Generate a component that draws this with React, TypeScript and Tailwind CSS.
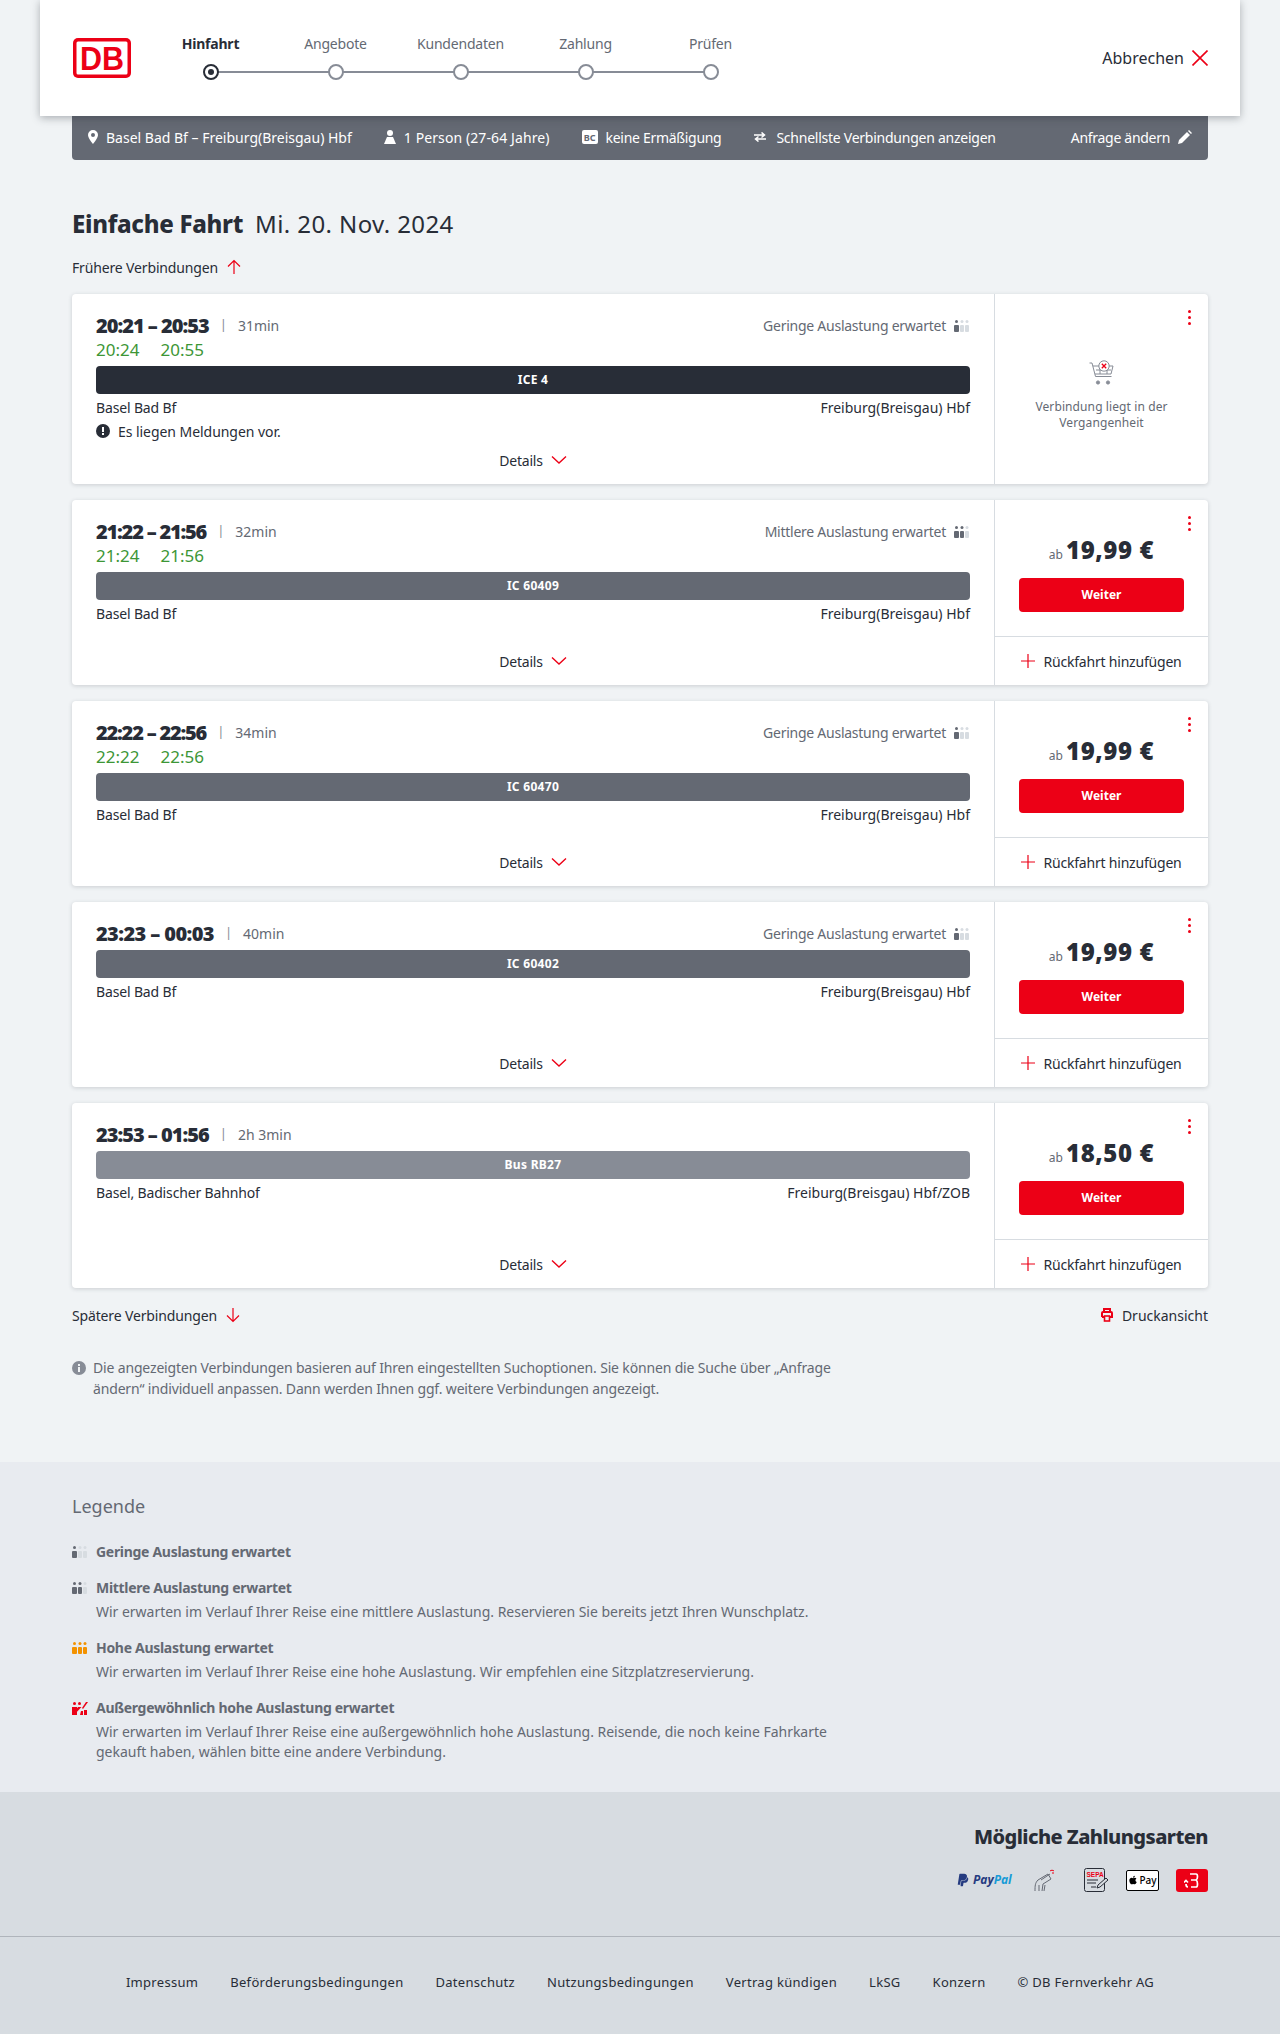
import React from "react";
import { FaPaypal, FaApple } from "react-icons/fa";

const RED = "#ec0016";

function Occ({ level, color = "#646973", off = "#d7dce1" }: { level: number; color?: string; off?: string }) {
  const c = (i: number) => (i < level ? color : off);
  return (
    <svg width="16" height="12" viewBox="0 0 16 12" className="shrink-0">
      {[0, 6, 11].map((x, i) => (
        <g key={i} fill={c(i)}>
          <circle cx={x + (i === 0 ? 2.5 : 2)} cy="1.5" r="1.5" />
          <rect x={x} y="5" width={i === 0 ? 5 : 4} height="7" rx="1" />
        </g>
      ))}
    </svg>
  );
}

function OccRed() {
  return (
    <svg width="16" height="13" viewBox="0 0 16 13" className="shrink-0">
      <g fill={RED}>
        <circle cx="2.5" cy="1.5" r="1.5" />
        <circle cx="7.5" cy="1.5" r="1.5" />
        <path d="M0 5h5v8H0zM6 5h3.5L2 13H0zM9 9h2v4H8zM12 8h3v5h-3z" />
        <path d="M10 6l4-6h2l-5 7z" />
      </g>
    </svg>
  );
}

function ArrowV({ up }: { up?: boolean }) {
  return (
    <svg width="16" height="16" viewBox="0 0 16 16" fill="none" stroke={RED} strokeWidth="1.2" className={up ? "" : "rotate-180"}>
      <path d="M8 15V1.5M2 7.5l6-6 6 6" />
    </svg>
  );
}

function Chevron() {
  return (
    <svg width="16" height="10" viewBox="0 0 16 10" fill="none" stroke={RED} strokeWidth="1.4">
      <path d="M1 1.5l7 6.5 7-6.5" />
    </svg>
  );
}

function Dots() {
  return (
    <div className="absolute right-[17px] top-[16px] flex flex-col gap-[3px]">
      <span className="block w-[3px] h-[3px] rounded-full bg-[#ec0016]" />
      <span className="block w-[3px] h-[3px] rounded-full bg-[#ec0016]" />
      <span className="block w-[3px] h-[3px] rounded-full bg-[#ec0016]" />
    </div>
  );
}

function Cart() {
  return (
    <svg width="26" height="26" viewBox="0 0 26 26" fill="none" stroke="#878c96" strokeWidth="1">
      <path d="M0.5 3h2.5l3.5 13.5h16" />
      <path d="M4 6h20l-2 8H6" />
      <path d="M7 10h15M11 6v8M18 6v8" />
      <circle cx="9" cy="22.5" r="1.6" fill="#878c96" />
      <circle cx="19" cy="22.5" r="1.6" fill="#878c96" />
      <circle cx="15" cy="6" r="5.2" fill="#fff" />
      <path d="M12.8 3.8l4.4 4.4M17.2 3.8l-4.4 4.4" stroke={RED} strokeWidth="1.3" />
    </svg>
  );
}

type Conn = {
  time: string;
  track: string;
  dur: string;
  green?: [string, string];
  load: string;
  level?: number;
  train: string;
  bar: string;
  from: string;
  to: string;
  price?: string;
  msg?: boolean;
};

const conns: Conn[] = [
  { time: "20:21 – 20:53", track: "tracking-[-1px]", dur: "31min", green: ["20:24", "20:55"], load: "Geringe Auslastung erwartet", level: 1, train: "ICE 4", bar: "bg-[#282d37]", from: "Basel Bad Bf", to: "Freiburg(Breisgau) Hbf", msg: true },
  { time: "21:22 – 21:56", track: "tracking-[-1.2px]", dur: "32min", green: ["21:24", "21:56"], load: "Mittlere Auslastung erwartet", level: 2, train: "IC 60409", bar: "bg-[#646973]", from: "Basel Bad Bf", to: "Freiburg(Breisgau) Hbf", price: "19,99 €" },
  { time: "22:22 – 22:56", track: "tracking-[-1.2px]", dur: "34min", green: ["22:22", "22:56"], load: "Geringe Auslastung erwartet", level: 1, train: "IC 60470", bar: "bg-[#646973]", from: "Basel Bad Bf", to: "Freiburg(Breisgau) Hbf", price: "19,99 €" },
  { time: "23:23 – 00:03", track: "tracking-[-0.6px]", dur: "40min", load: "Geringe Auslastung erwartet", level: 1, train: "IC 60402", bar: "bg-[#646973]", from: "Basel Bad Bf", to: "Freiburg(Breisgau) Hbf", price: "19,99 €" },
  { time: "23:53 – 01:56", track: "tracking-[-1px]", dur: "2h 3min", load: "", train: "Bus RB27", bar: "bg-[#878c96]", from: "Basel, Badischer Bahnhof", to: "Freiburg(Breisgau) Hbf/ZOB", price: "18,50 €" },
];

function Card({ c }: { c: Conn }) {
  return (
    <div className={`flex bg-white rounded-[4px] shadow-[0_1px_4px_rgba(40,45,55,0.18)] ${c.msg ? "h-[190px]" : "h-[185px]"}`}>
      <div className="flex-1 min-w-0 flex flex-col pt-[20px] pl-[24px] pr-[24px] pb-[14px]">
        <div className="flex items-center h-[24px]">
          <span className={`text-[20px] font-black ${c.track} text-[#282d37]`}>{c.time}</span>
          <span className="ml-[11px] pb-[2px] text-[13px] text-[#878c96]">|</span>
          <span className="ml-[11px] pb-[2px] text-[14px] text-[#646973]">{c.dur}</span>
          {c.load && (
            <div className="ml-auto flex items-center gap-[8px]">
              <span className="pb-[2px] text-[14px] tracking-[-0.25px] text-[#646973]">{c.load}</span>
              <Occ level={c.level ?? 1} />
            </div>
          )}
        </div>
        {c.green && (
          <div className="flex h-[24px] items-center text-[17px] text-[#3d9636] gap-[21px]">
            <span>{c.green[0]}</span>
            <span>{c.green[1]}</span>
          </div>
        )}
        <div className={`mt-[4px] h-[28px] rounded-[4px] ${c.bar} flex items-center justify-center text-white text-[12px] font-bold tracking-[0.3px]`}>
          {c.train}
        </div>
        <div className="mt-[3px] h-[20px] flex justify-between items-center text-[14px] text-[#282d37]">
          <span className="tracking-[-0.15px]">{c.from}</span>
          <span>{c.to}</span>
        </div>
        {c.msg && (
          <div className="mt-[4px] h-[20px] flex items-center gap-[8px] text-[14px] tracking-[-0.05px] text-[#282d37]">
            <svg width="14" height="14" viewBox="0 0 14 14">
              <circle cx="7" cy="7" r="7" fill="#282d37" />
              <rect x="6" y="3" width="2" height="5" fill="#fff" />
              <rect x="6" y="9" width="2" height="2" fill="#fff" />
            </svg>
            Es liegen Meldungen vor.
          </div>
        )}
        <div className="mt-auto h-[20px] flex items-center justify-center gap-[8px] text-[14px] tracking-[-0.2px] text-[#282d37]">
          Details
          <Chevron />
        </div>
      </div>
      <div className="relative w-[214px] shrink-0 border-l border-[#d7dce1] flex flex-col">
        <Dots />
        {c.price ? (
          <>
            <div className="h-[137px] border-b border-[#d7dce1] flex flex-col items-center pt-[32px]">
              <div className="flex items-baseline gap-[3px] h-[36px]">
                <span className="text-[12px] text-[#646973]">ab</span>
                <span className="text-[24px] font-black tracking-[0.6px] text-[#282d37] leading-[36px]">{c.price}</span>
              </div>
              <div className="mt-[10px] w-[165px] h-[34px] rounded-[4px] bg-[#ec0016] text-white text-[12px] font-bold flex items-center justify-center">
                Weiter
              </div>
            </div>
            <div className="flex-1 flex items-center justify-center gap-[8px] text-[14px] tracking-[-0.2px] text-[#282d37]">
              <svg width="14" height="14" viewBox="0 0 14 14" stroke={RED} strokeWidth="1.2">
                <path d="M7 0v14M0 7h14" />
              </svg>
              Rückfahrt hinzufügen
            </div>
          </>
        ) : (
          <div className="flex-1 flex flex-col items-center pt-[66px]">
            <Cart />
            <div className="mt-[13px] w-[150px] text-center text-[12px] tracking-[0.1px] leading-[16px] text-[#646973]">
              Verbindung liegt in der Vergangenheit
            </div>
          </div>
        )}
      </div>
    </div>
  );
}

function Step({ label, active, last }: { label: string; active?: boolean; last?: boolean }) {
  return (
    <div className="relative w-[125px] flex flex-col items-center">
      <span className={`text-[14px] leading-[20px] tracking-[-0.2px] ${active ? "font-bold text-[#282d37]" : "text-[#646973]"}`}>{label}</span>
      <div className="mt-[10px] relative h-[16px] w-full flex justify-center">
        {!last && <div className="absolute left-1/2 top-[7px] w-full h-[2px] bg-[#878c96]" />}
        <div className={`relative w-[16px] h-[16px] rounded-full border-2 bg-white flex items-center justify-center ${active ? "border-[#282d37]" : "border-[#878c96]"}`}>
          {active && <span className="block w-[6px] h-[6px] rounded-full bg-[#282d37]" />}
        </div>
      </div>
    </div>
  );
}

function Legend({ icon, title, children, mb }: { icon: React.ReactNode; title: string; children?: React.ReactNode; mb?: string }) {
  return (
    <div className={`flex ${mb ?? ""}`}>
      <div className="w-[24px] shrink-0 pt-[4px]">{icon}</div>
      <div>
        <div className="text-[14px] leading-[20px] font-bold tracking-[-0.3px] text-[#646973]">{title}</div>
        {children && <div className="mt-[4px] w-[780px] text-[14px] leading-[20px] tracking-[-0.02px] text-[#646973]">{children}</div>}
      </div>
    </div>
  );
}

export default function App() {
  return (
    <div className="min-h-[2034px] bg-[#f0f3f5] font-['Noto_Sans','Open_Sans',sans-serif] text-[#282d37]">
      <div className="relative z-10 mx-[40px] h-[116px] bg-white shadow-[0_2px_8px_rgba(40,45,55,0.35)] flex items-center pl-[33px] pr-[32px]">
        <svg width="58" height="40" viewBox="0 0 58 40" className="shrink-0">
          <rect x="0" y="0" width="58" height="40" rx="5" fill={RED} />
          <rect x="3.500" y="3.500" width="51" height="33" rx="1.5" fill="#fff" />
          <text x="29" y="32" textAnchor="middle" fontFamily="'Liberation Sans',sans-serif" fontWeight="700" fontSize="33" fill={RED} textLength="44" lengthAdjust="spacingAndGlyphs">DB</text>
        </svg>
        <div className="ml-[17px] flex self-start mt-[34px]">
          <Step label="Hinfahrt" active />
          <Step label="Angebote" />
          <Step label="Kundendaten" />
          <Step label="Zahlung" />
          <Step label="Prüfen" last />
        </div>
        <div className="ml-auto flex items-center gap-[8px] text-[16px]">
          Abbrechen
          <svg width="16" height="16" viewBox="0 0 16 16" stroke={RED} strokeWidth="1.6">
            <path d="M0.5 0.5l15 15M15.5 0.5l-15 15" />
          </svg>
        </div>
      </div>

      <div className="mx-[72px] h-[44px] bg-[#646973] rounded-b-[4px] flex items-center px-[16px] pb-[2px] text-[14px] text-white">
        <svg width="10" height="14" viewBox="0 0 10 14" fill="#fff" className="mr-[8px]">
          <path fillRule="evenodd" d="M5 0a5 5 0 0 1 5 5c0 3.4-5 9-5 9S0 8.400 0 5a5 5 0 0 1 5-5zm0 3a2 2 0 1 0 0 4 2 2 0 0 0 0-4z" />
        </svg>
        <span>Basel Bad Bf – Freiburg(Breisgau) Hbf</span>
        <svg width="12" height="14" viewBox="0 0 12 14" fill="#fff" className="ml-[32px] mr-[8px]">
          <circle cx="6" cy="3" r="3" />
          <path d="M3 7h6l3 7H0z" />
        </svg>
        <span className="tracking-[0.1px]">1 Person (27-64 Jahre)</span>
        <span className="ml-[32px] mr-[8px] w-[16px] h-[14px] rounded-[2px] bg-white text-[#646973] text-[9px] font-bold flex items-center justify-center leading-none">BC</span>
        <span className="tracking-[-0.3px]">keine Ermäßigung</span>
        <svg width="12" height="10" viewBox="0 0 12 10" fill="none" stroke="#fff" strokeWidth="1.5" className="ml-[33px] mr-[10px]">
          <path d="M0 3h10M7.500 0.500L10.500 3 7.500 5.500M12 7H2M4.500 4.500L1.500 7l3 2.500" />
        </svg>
        <span className="tracking-[-0.25px]">Schnellste Verbindungen anzeigen</span>
        <span className="ml-auto mr-[8px] tracking-[-0.3px]">Anfrage ändern</span>
        <svg width="14" height="14" viewBox="0 0 14 14" fill="#fff">
          <path d="M0 14l1-4 8-8 3 3-8 8zM10 1l1-1 3 3-1 1z" />
        </svg>
      </div>

      <div className="mx-[72px]">
        <div className="mt-[48px] h-[32px] flex items-center gap-[12px] text-[24px]">
          <span className="font-extrabold tracking-[-0.3px]">Einfache Fahrt</span>
          <span className="tracking-[0.4px] text-[#282d37]">Mi. 20. Nov. 2024</span>
        </div>
        <div className="mt-[17px] h-[20px] flex items-center gap-[8px] text-[14px] tracking-[-0.15px]">
          Frühere Verbindungen
          <ArrowV up />
        </div>
        <div className="mt-[17px] flex flex-col gap-[16px]">
          {conns.map((c) => (
            <Card key={c.time} c={c} />
          ))}
        </div>
        <div className="mt-[17px] h-[20px] flex items-center text-[14px]">
          <span className="tracking-[-0.15px]">Spätere Verbindungen</span>
          <span className="ml-[8px]"><ArrowV /></span>
          <span className="ml-auto flex items-center gap-[8px]">
            <svg width="14" height="14" viewBox="0 0 14 14" fill="none" stroke={RED} strokeWidth="2">
              <path d="M4 3V1h6v2M2 9V5a1 1 0 0 1 1-1h8a1 1 0 0 1 1 1v4h-2M4 9H2" />
              <rect x="4.500" y="8" width="5" height="5" strokeWidth="1.6" />
            </svg>
            Druckansicht
          </span>
        </div>
        <div className="mt-[32px] flex gap-[7px] w-[780px] text-[14px] leading-[21px] tracking-[-0.16px] text-[#646973]">
          <svg width="14" height="14" viewBox="0 0 14 14" className="mt-[4px] shrink-0">
            <circle cx="7" cy="7" r="7" fill="#878c96" />
            <rect x="6" y="6" width="2" height="5" fill="#f0f3f5" />
            <rect x="6" y="3" width="2" height="2" fill="#f0f3f5" />
          </svg>
          <p>Die angezeigten Verbindungen basieren auf Ihren eingestellten Suchoptionen. Sie können die Suche über „Anfrage ändern“ individuell anpassen. Dann werden Ihnen ggf. weitere Verbindungen angezeigt.</p>
        </div>
      </div>

      <div className="mt-[63px] h-[330px] bg-[#e8ebf0] px-[72px] pt-[31px]">
        <div className="text-[18px] leading-[26px] text-[#646973]">Legende</div>
        <div className="mt-[23px] flex flex-col">
          <Legend icon={<Occ level={1} off="#d7dce1" />} title="Geringe Auslastung erwartet" mb="mb-[16px]" />
          <Legend icon={<Occ level={2} />} title="Mittlere Auslastung erwartet" mb="mb-[16px]">
            Wir erwarten im Verlauf Ihrer Reise eine mittlere Auslastung. Reservieren Sie bereits jetzt Ihren Wunschplatz.
          </Legend>
          <Legend icon={<Occ level={3} color="#f39200" />} title="Hohe Auslastung erwartet" mb="mb-[16px]">
            Wir erwarten im Verlauf Ihrer Reise eine hohe Auslastung. Wir empfehlen eine Sitzplatzreservierung.
          </Legend>
          <Legend icon={<OccRed />} title="Außergewöhnlich hohe Auslastung erwartet">
            Wir erwarten im Verlauf Ihrer Reise eine außergewöhnlich hohe Auslastung. Reisende, die noch keine Fahrkarte gekauft haben, wählen bitte eine andere Verbindung.
          </Legend>
        </div>
      </div>

      <div className="bg-[#d7dce1] h-[242px] flex flex-col">
        <div className="h-[145px] border-b border-[#afb4bb] px-[72px] pt-[30px] flex flex-col items-end">
          <div className="text-[20px] leading-[30px] font-extrabold text-[#282d37] tracking-[-0.55px]">Mögliche Zahlungsarten</div>
          <div className="mt-[15px] flex items-center h-[26px]">
            <div className="flex items-center gap-[3px] w-[56px]">
              <FaPaypal className="text-[#253b80]" size={14} />
              <span className="text-[12px] font-bold italic leading-none"><span className="text-[#253b80]">Pay</span><span className="text-[#179bd7]">Pal</span></span>
            </div>
            <svg width="22" height="24" viewBox="0 0 22 24" fill="none" stroke="#646973" strokeWidth="1" className="ml-[22px]">
              <path d="M1 23c0-5 0-8 3-11l10-6 3 5-8 5-1 7M5 23v-6M10 23l1-6" />
              <path d="M7 12l9-6" />
              <path d="M16 3c1-1 3-1 4 0M18 5h2" stroke={RED} />
            </svg>
            <svg width="26" height="24" viewBox="0 0 26 24" fill="none" className="ml-[28px]">
              <rect x="0.500" y="0.500" width="20" height="23" rx="2" stroke="#282d37" fill="#d7dce1" />
              <text x="2.500" y="9" fontSize="6.500" fontWeight="700" fill={RED} fontFamily="'Liberation Sans',sans-serif">SEPA</text>
              <path d="M3 12h11M3 15h9M7 19h5" stroke="#282d37" />
              <path d="M13 20l1-3 8-7 2 2-8 7z" stroke="#282d37" fill="#d7dce1" />
            </svg>
            <div className="ml-[16px] w-[33px] h-[21px] rounded-[2px] border border-black bg-white flex items-center justify-center gap-[1px] text-[10px] font-medium text-black leading-none">
              <FaApple size={10} />Pay
            </div>
            <div className="ml-[17px] w-[32px] h-[23px] rounded-[3px] bg-[#ec0016] flex items-center justify-center">
              <svg width="16" height="15" viewBox="0 0 16 15" fill="none" stroke="#fff" strokeWidth="1.700">
                <path d="M6 1h6c2 0 2 5 0 6 2 1 2 7 0 7H7M7 7h5M4 14c-1 0-2-1-2-3M0 9.500l2-2 2 2" />
              </svg>
            </div>
          </div>
        </div>
        <div className="flex-1 flex items-center justify-center gap-[32px] text-[13px] tracking-[0.3px] text-[#282d37] pb-[5px]">
          <span>Impressum</span>
          <span>Beförderungsbedingungen</span>
          <span>Datenschutz</span>
          <span>Nutzungsbedingungen</span>
          <span>Vertrag kündigen</span>
          <span>LkSG</span>
          <span>Konzern</span>
          <span>© DB Fernverkehr AG</span>
        </div>
      </div>
    </div>
  );
}
